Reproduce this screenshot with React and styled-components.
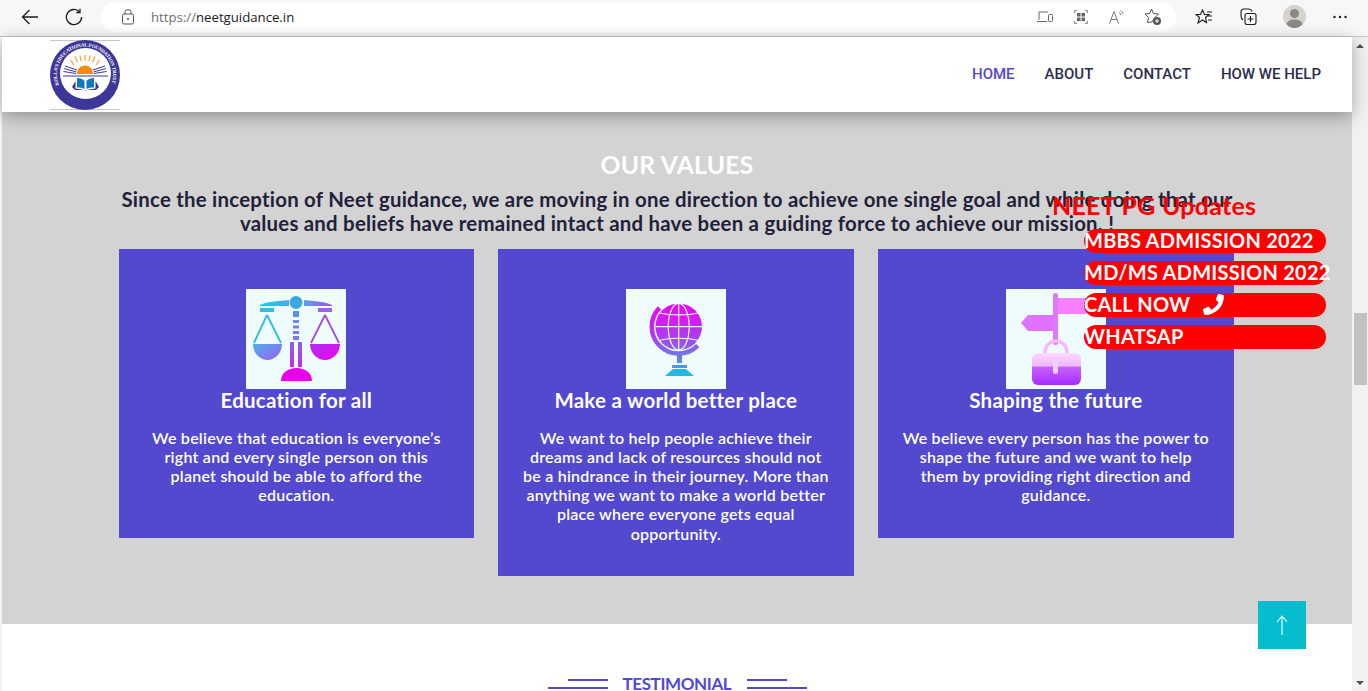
import React from "react";
import styled, {createGlobalStyle} from "styled-components";
import {FaPhone} from "react-icons/fa";

const GlobalStyle = createGlobalStyle`
  html, body {
    margin: 0;
    padding: 0;
    height: 691px;
    overflow: hidden;
    background: #fff;
  }
  * {
    box-sizing: border-box;
  }
`;

const PURPLE = "#5249cf";
const BODY_FONT = `"Lato", "Open Sans", sans-serif`;

const Shell = styled.div`
  width: 1368px;
  height: 691px;
  display: flex;
  flex-direction: column;
  overflow: hidden;
`;

const BrowserBar = styled.div`
  height: 37px;
  flex: none;
  background: #f7f7f7;
  border-bottom: 1px solid #c4c4c4;
  display: flex;
  align-items: center;
  padding: 0 0 3px 0;
`;

const NavIcon = styled.div`
  width: ${(p) => p.$w || 44}px;
  flex: none;
  display: flex;
  justify-content: center;
  align-items: center;
`;

const AddressBar = styled.div`
  width: 1075px;
  height: 30px;
  margin-left: 12px;
  background: #fff;
  border-radius: 15px;
  display: flex;
  align-items: center;
  padding: 0 5px 0 21px;
  font: 13.2px "Open Sans", sans-serif;
  color: #1a1a1a;
`;

const Protocol = styled.span`
  color: #6e6e6e;
  margin-left: 17px;
`;

const AddressIcons = styled.div`
  margin-left: auto;
  display: grid;
  grid-template-columns: repeat(4, 36px);
  justify-items: center;
  align-items: center;
`;

const ToolIcons = styled.div`
  display: flex;
  align-items: center;
  margin-left: 6px;
`;

const Viewport = styled.div`
  flex: 1;
  display: flex;
  min-height: 0;
`;

const Page = styled.div`
  position: relative;
  width: 1352px;
  padding-left: 2px;
  background: #f3f3f3;
  font-family: ${BODY_FONT};
  letter-spacing: 0.015em;
  display: flex;
  flex-direction: column;
`;

const Header = styled.header`
  position: relative;
  z-index: 2;
  height: 75px;
  flex: none;
  background: #fff;
  box-shadow: 0 4px 16px rgba(0, 0, 0, 0.32);
  display: flex;
  align-items: center;
  justify-content: space-between;
  padding: 0 31px 0 48px;
`;

const Menu = styled.nav`
  display: flex;
  gap: 30px;
  padding-bottom: 2px;
  font: 500 15px "Roboto", sans-serif;
  letter-spacing: 0;
`;

const MenuItem = styled.a`
  color: ${(p) => (p.$active ? PURPLE : "#2a2d4f")};
`;

const Values = styled.section`
  height: 512px;
  flex: none;
  background: #d3d3d3;
  padding: 38px 0 0;
  text-align: center;
`;

const ValuesTitle = styled.h2`
  margin: 0;
  font-size: 24.7px;
  line-height: 29px;
  font-weight: 700;
  color: #fff;
`;

const ValuesIntro = styled.p`
  margin: 8px auto 0;
  width: 1130px;
  font-size: 20.4px;
  line-height: 24px;
  font-weight: 700;
  color: #212139;
`;

const CardRow = styled.div`
  width: 1115px;
  margin: 14px 0 0 116.8px;
  display: grid;
  grid-template-columns: 355px 356px 356px;
  column-gap: 24px;
  align-items: start;
`;

const Card = styled.article`
  background: ${PURPLE};
  padding: 40px 24px 33.4px;
  color: #fff;
  min-height: 289px;
`;

const CardArt = styled.svg`
  display: block;
  width: 100px;
  height: 100px;
  margin: 0 auto;
  background: #effcfd;
`;

const CardTitle = styled.h3`
  margin: 0 0 15.6px;
  font-size: 20.5px;
  line-height: 23px;
  font-weight: 700;
`;

const CardText = styled.p`
  margin: 0;
  font-size: 16px;
  line-height: 19.2px;
  font-weight: 600;
`;

const Testimonial = styled.section`
  flex: 1;
  background: #fff;
  display: flex;
  justify-content: center;
  align-items: flex-start;
  padding-top: 50px;
  gap: 15px;
`;

const TestimonialLabel = styled.h4`
  margin: 0;
  width: 109px;
  font-size: 17px;
  line-height: 20px;
  font-weight: 700;
  letter-spacing: -0.4px;
  white-space: nowrap;
  color: ${PURPLE};
`;

const DoubleRule = styled.div`
  width: 60px;
  padding-top: 5px;
  display: flex;
  flex-direction: column;
  align-items: ${(p) => (p.$left ? "flex-end" : "flex-start")};
  gap: 6px;
`;

const Rule = styled.span`
  display: block;
  height: 2px;
  width: ${(p) => p.$w}px;
  background: ${PURPLE};
`;

const Updates = styled.aside`
  position: absolute;
  z-index: 3;
  top: 155px;
  left: 1052px;
  width: 274px;
`;

const UpdatesTitle = styled.div`
  font-size: 25px;
  line-height: 27px;
  font-weight: 700;
  color: #f00;
`;

const UpdateLinks = styled.div`
  margin: 10px 0 0 32px;
  display: flex;
  flex-direction: column;
  gap: 8px;
`;

const UpdateLink = styled.a`
  height: 24px;
  padding-bottom: 2px;
  display: flex;
  align-items: center;
  gap: 13px;
  background: #f00;
  border-radius: 12px;
  color: #fff;
  font-size: 20px;
  font-weight: 700;
  white-space: nowrap;
`;

const ScrollTop = styled.button`
  position: absolute;
  z-index: 3;
  top: 564px;
  left: 1258px;
  width: 48px;
  height: 48px;
  border: 0;
  padding: 0;
  background: #06bccf;
  display: flex;
  align-items: center;
  justify-content: center;
`;

const Scrollbar = styled.div`
  width: 16px;
  flex: none;
  background: #f1f1f1;
  display: flex;
  flex-direction: column;
  align-items: center;
  padding-top: 7px;
`;

const Thumb = styled.div`
  width: 13px;
  height: 72px;
  margin-top: 265px;
  background: #c1c1c1;
`;

const Arrow = styled.span`
  width: 0;
  height: 0;
  border-left: 4px solid transparent;
  border-right: 4px solid transparent;
  border-${(p) => (p.$down ? "top" : "bottom")}: 4px solid #505050;
  margin-top: ${(p) => p.$gap || 0}px;
`;

const cards = [
    {
        title: "Education for all",
        text: "We believe that education is everyone’s right and every single person on this planet should be able to afford the education.",
        art: <ScaleArt/>,
    },
    {
        title: "Make a world better place",
        text: "We want to help people achieve their dreams and lack of resources should not be a hindrance in their journey. More than anything we want to make a world better place where everyone gets equal opportunity.",
        art: <GlobeArt/>,
    },
    {
        title: "Shaping the future",
        text: "We believe every person has the power to shape the future and we want to help them by providing right direction and guidance.",
        art: <SignArt/>,
    },
];

function ScaleArt() {
    return (
        <CardArt viewBox="0 0 100 100">
            <defs>
                <linearGradient id="armL" x1="0" x2="1" y1="0" y2="0">
                    <stop offset="0" stopColor="#0ad4e0"/>
                    <stop offset="1" stopColor="#50a8e8"/>
                </linearGradient>
                <linearGradient id="armR" x1="0" x2="1" y1="0" y2="0">
                    <stop offset="0" stopColor="#5aa0e8"/>
                    <stop offset="1" stopColor="#a050f0"/>
                </linearGradient>
                <linearGradient id="bowlL" x1="0" x2="1" y1="0" y2="1">
                    <stop offset="0" stopColor="#4fb0e8"/>
                    <stop offset="1" stopColor="#9a60f0"/>
                </linearGradient>
                <linearGradient id="bowlR" x1="0" x2="1" y1="0" y2="1">
                    <stop offset="0" stopColor="#b030f0"/>
                    <stop offset="1" stopColor="#f000f0"/>
                </linearGradient>
                <linearGradient id="stem" x1="0" x2="0" y1="0" y2="1">
                    <stop offset="0" stopColor="#8a60f0"/>
                    <stop offset="1" stopColor="#c030f0"/>
                </linearGradient>
            </defs>
            <circle cx="50" cy="13.5" r="6.5" fill="#3fa6e0"/>
            <path d="M14 16C20 13 32 12 43 11V17H14Z" fill="url(#armL)"/>
            <path d="M58 11C68 12 80 13 86 16V17H58Z" fill="url(#armR)"/>
            <rect x="14" y="19" width="14" height="4" fill="#2cc2e2"/>
            <rect x="72" y="19" width="14" height="4" fill="#9a60f0"/>
            <rect x="47" y="22" width="6" height="6" fill="#5f8ee8"/>
            <rect x="47" y="31" width="6" height="3" fill="#6a86ea"/>
            <rect x="47" y="36.500" width="6" height="3" fill="#6e82ec"/>
            <rect x="47" y="42" width="6" height="3" fill="#7480ec"/>
            <rect x="47" y="47" width="6" height="4" fill="#7a78ee"/>
            <rect x="44" y="53" width="4" height="25" fill="url(#stem)"/>
            <rect x="52" y="53" width="4" height="25" fill="url(#stem)"/>
            <path d="M35 92C35 84 42 79 50.500 79S66 84 66 92Z" fill="#e800ea"/>
            <path d="M21 26L8 54M21 26L35 54" stroke="#2cbce4" strokeWidth="1.800" fill="none"/>
            <path d="M7 55H36C36 64 29 71 21.500 71S7 64 7 55Z" fill="url(#bowlL)"/>
            <path d="M79 26L65 54M79 26L93 54" stroke="#a845f0" strokeWidth="1.800" fill="none"/>
            <path d="M64 55H94C94 64 87 71 79 71S64 64 64 55Z" fill="url(#bowlR)"/>
        </CardArt>
    );
}

function GlobeArt() {
    return (
        <CardArt viewBox="0 0 100 100">
            <defs>
                <linearGradient id="globe" gradientUnits="userSpaceOnUse" x1="0" x2="0" y1="12" y2="88">
                    <stop offset="0" stopColor="#f400ee"/>
                    <stop offset="0.45" stopColor="#b038f0"/>
                    <stop offset="0.75" stopColor="#6a80ea"/>
                    <stop offset="1" stopColor="#20bce0"/>
                </linearGradient>
            </defs>
            <circle cx="52.700" cy="37.700" r="23.300" fill="url(#globe)"/>
            <g fill="none" stroke="#effcfd" strokeWidth="1.200">
                <ellipse cx="52.700" cy="37.700" rx="10.500" ry="23.300"/>
                <path d="M52.700 14.400V61M29.400 37.700H76"/>
                <path d="M33.500 24C44 26.500 62 26.500 72 24M33.500 51.500C44 48.500 62 48.500 72 51.500"/>
            </g>
            <path d="M33.500 18.900A26.800 26.800 0 0 0 71.700 56.600" stroke="url(#globe)" strokeWidth="4.500" fill="none"/>
            <rect x="51" y="64" width="5" height="10" fill="url(#globe)"/>
            <rect x="46" y="76" width="15" height="3" fill="url(#globe)"/>
            <path d="M39 87L47 80H60L68 87Z" fill="#24b8e2"/>
        </CardArt>
    );
}

function SignArt() {
    return (
        <CardArt viewBox="0 0 100 100">
            <defs>
                <linearGradient id="bag" x1="0" x2="0" y1="0" y2="1">
                    <stop offset="0" stopColor="#ffd8ff"/>
                    <stop offset="0.4" stopColor="#ecb8ff"/>
                    <stop offset="0.45" stopColor="#c860ff"/>
                    <stop offset="1" stopColor="#a82cff"/>
                </linearGradient>
            </defs>
            <rect x="47" y="4" width="5" height="52" rx="2.500" fill="#e078ff"/>
            <path d="M52 9H80L84 17L80 25H52Z" fill="#f880ff"/>
            <path d="M15 34L22 26H47V42H22Z" fill="#de72ff"/>
            <path d="M39 64C39 48 61 48 61 64" stroke="#f8b8ff" strokeWidth="3.500" fill="none"/>
            <rect x="26" y="64" width="49" height="32" rx="6" fill="url(#bag)"/>
            <rect x="47" y="71" width="5" height="14" rx="2.500" fill="#f0d0ff"/>
        </CardArt>
    );
}

function Logo() {
    return (
        <svg width="70" height="70" viewBox="0 0 70 70">
            <defs>
                <path id="ringText" d="M9 45A28 28 0 1 1 61 45"/>
            </defs>
            <rect width="70" height="1" y="0" fill="#c8c8c8"/>
            <rect width="70" height="1" y="69" fill="#c8c8c8"/>
            <circle cx="35" cy="35" r="35" fill="#3b3697"/>
            <circle cx="35.500" cy="33.500" r="25.500" fill="#fff"/>
            <text fontFamily="'Liberation Serif', serif" fontWeight="700" fontSize="5" fill="#fff">
                <textPath href="#ringText" textLength="107">KOLLA’S EDUCATIONAL FOUNDATION TRUST</textPath>
            </text>
            <path d="M27 34C27 29 30.500 25.500 35 25.500S43 29 43 34Z" fill="#f58a12"/>
            <g stroke="#f7a53c" strokeWidth="1.300">
                <path d="M24 25L20.500 20M27.500 22L25 16.500M31 21L30 15.500M35 20.500V15M39 21L40 15.500M42.500 22L45 16.500M46 25L49.500 20"/>
            </g>
            <g stroke="#3b3697" strokeWidth="1">
                <path d="M15 26L27 30M14 28.500L26.500 32M13.500 31.500L26 33.500M55 26L43 30M56 28.500L43.500 32M56.500 31.500L44 33.500"/>
                <path d="M13 36H58" strokeWidth="1.200"/>
            </g>
            <path d="M27 38C30 38 33 39 34.500 41V49C32 47.500 30 47.500 27 47.500Z" fill="#0d77c4"/>
            <path d="M44 38C41 38 38 39 36.500 41V49C39 47.500 41 47.500 44 47.500Z" fill="#0d77c4"/>
            <path d="M22 47L25.500 41V48.500L32 49.500L35.500 50.500L39 49.500L45.500 48.500V41L49 47L46 50H25Z" fill="#3b3697"/>
        </svg>
    );
}

function BackIcon() {
    return (
        <svg width="18" height="16" viewBox="0 0 18 16" fill="none" stroke="#1c1c1c" strokeWidth="1.300">
            <path d="M17 8H1.500M8.500 1L1.500 8L8.500 15"/>
        </svg>
    );
}

function ReloadIcon() {
    return (
        <svg width="18" height="18" viewBox="0 0 18 18" fill="none" stroke="#1c1c1c" strokeWidth="1.300">
            <path d="M14.500 3.800A7.600 7.600 0 1 0 16.600 9"/>
            <path d="M15 0.800V4.500H11.300"/>
        </svg>
    );
}

function LockIcon() {
    return (
        <svg width="12" height="16" viewBox="0 0 12 16" fill="none" stroke="#555" strokeWidth="1">
            <rect x="0.500" y="5" width="11" height="10" rx="1.500"/>
            <path d="M3 5V3.500A3 3 0 0 1 9 3.500V5"/>
            <circle cx="6" cy="10" r="1" fill="#555" stroke="none"/>
        </svg>
    );
}

function DeviceIcon() {
    return (
        <svg width="16" height="12" viewBox="0 0 16 12" fill="none" stroke="#666" strokeWidth="1">
            <path d="M2 9V1H11M0 10.500H10"/>
            <rect x="11.500" y="3.500" width="4" height="7" rx="0.800"/>
        </svg>
    );
}

function GridIcon() {
    return (
        <svg width="14" height="14" viewBox="0 0 14 14" fill="#666">
            <path d="M0.500 3V0.500H3M11 0.500H13.500V3M13.500 11V13.500H11M3 13.500H0.500V11" fill="none" stroke="#888"/>
            <rect x="3" y="3" width="3.500" height="3.500"/>
            <rect x="7.500" y="3" width="3.500" height="3.500"/>
            <rect x="3" y="7.500" width="3.500" height="3.500"/>
            <rect x="7.500" y="7.500" width="3.500" height="3.500"/>
        </svg>
    );
}

function ReadAloudIcon() {
    return (
        <svg width="16" height="14" viewBox="0 0 16 14" fill="none" stroke="#777" strokeWidth="1">
            <path d="M0.500 13.500L5 1.500L9.500 13.500M2 9.500H8"/>
            <path d="M10 2.500C11 3 11.500 4 11.700 5M11.500 0.500C13 1.300 13.800 2.800 14 4.500"/>
        </svg>
    );
}

function StarAddIcon() {
    return (
        <svg width="18" height="18" viewBox="0 0 18 18" fill="none" stroke="#555" strokeWidth="1">
            <path d="M7.500 1L9.500 5.500L14.500 6L11 9.500L8 14L3.500 14.500L4.500 9.500L1 6L5.500 5.500Z"/>
            <circle cx="13" cy="13" r="4" fill="#555" stroke="none"/>
            <path d="M13 11V15M11 13H15" stroke="#fff"/>
        </svg>
    );
}

function FavoritesIcon() {
    return (
        <svg width="18" height="16" viewBox="0 0 18 16" fill="none" stroke="#1c1c1c" strokeWidth="1.100">
            <path d="M7.500 1L9.500 5.500H14L10.500 8.500L11.500 13.500L7.500 11L3 14L4.500 8.500L1 5.500H5.500Z"/>
            <path d="M12 3H17M13 7H17M13 11H17"/>
        </svg>
    );
}

function CollectionsIcon() {
    return (
        <svg width="17" height="17" viewBox="0 0 17 17" fill="none" stroke="#1c1c1c" strokeWidth="1.100">
            <path d="M3 12C1.500 11 1 9.500 1 8V4C1 2 2 1 4 1H9C10.500 1 11.500 2 12 3.500"/>
            <rect x="5" y="5.500" width="11" height="11" rx="2"/>
            <path d="M10.500 8V14M7.500 11H13.500"/>
        </svg>
    );
}

function ProfileIcon() {
    return (
        <svg width="23" height="23" viewBox="0 0 23 23">
            <circle cx="11.500" cy="11.500" r="11.500" fill="#d6d3cf"/>
            <circle cx="11.500" cy="8.500" r="4.500" fill="#8c8985"/>
            <path d="M3.500 19C5 15.500 8 14.500 11.500 14.500S18 15.500 19.500 19C17.500 21.500 14.500 23 11.500 23S5.500 21.500 3.500 19Z" fill="#8c8985"/>
        </svg>
    );
}

function MoreIcon() {
    return (
        <svg width="14" height="4" viewBox="0 0 14 4" fill="#1c1c1c">
            <circle cx="1.500" cy="2" r="1.200"/>
            <circle cx="7" cy="2" r="1.200"/>
            <circle cx="12.500" cy="2" r="1.200"/>
        </svg>
    );
}

function UpArrow() {
    return (
        <svg width="12" height="20" viewBox="0 0 12 20" fill="none" stroke="#fff" strokeWidth="1.100">
            <path d="M6 20V1M1 7L6 1L11 7"/>
        </svg>
    );
}

export default function App() {
    return (
        <Shell>
            <GlobalStyle/>
            <BrowserBar>
                <NavIcon $w={59}><BackIcon/></NavIcon>
                <NavIcon $w={30}><ReloadIcon/></NavIcon>
                <AddressBar>
                    <LockIcon/>
                    <Protocol>https://</Protocol>neetguidance.in
                    <AddressIcons>
                        <DeviceIcon/>
                        <GridIcon/>
                        <ReadAloudIcon/>
                        <StarAddIcon/>
                    </AddressIcons>
                </AddressBar>
                <ToolIcons>
                    <NavIcon><FavoritesIcon/></NavIcon>
                    <NavIcon><CollectionsIcon/></NavIcon>
                    <NavIcon $w={48}><ProfileIcon/></NavIcon>
                    <NavIcon><MoreIcon/></NavIcon>
                </ToolIcons>
            </BrowserBar>
            <Viewport>
                <Page>
                    <Header>
                        <Logo/>
                        <Menu>
                            <MenuItem $active>HOME</MenuItem>
                            <MenuItem>ABOUT</MenuItem>
                            <MenuItem>CONTACT</MenuItem>
                            <MenuItem>HOW WE HELP</MenuItem>
                        </Menu>
                    </Header>
                    <Values>
                        <ValuesTitle>OUR VALUES</ValuesTitle>
                        <ValuesIntro>
                            Since the inception of Neet guidance, we are moving in one direction to achieve one single goal and while doing that our values and beliefs have remained intact and have been a guiding force to achieve our mission. !
                        </ValuesIntro>
                        <CardRow>
                            {cards.map((card) => (
                                <Card key={card.title}>
                                    {card.art}
                                    <CardTitle>{card.title}</CardTitle>
                                    <CardText>{card.text}</CardText>
                                </Card>
                            ))}
                        </CardRow>
                    </Values>
                    <Testimonial>
                        <DoubleRule $left>
                            <Rule $w={40}/>
                            <Rule $w={60}/>
                        </DoubleRule>
                        <TestimonialLabel>TESTIMONIAL</TestimonialLabel>
                        <DoubleRule>
                            <Rule $w={40}/>
                            <Rule $w={60}/>
                        </DoubleRule>
                    </Testimonial>
                    <Updates>
                        <UpdatesTitle>NEET PG Updates</UpdatesTitle>
                        <UpdateLinks>
                            <UpdateLink>MBBS ADMISSION 2022</UpdateLink>
                            <UpdateLink>MD/MS ADMISSION 2022</UpdateLink>
                            <UpdateLink>CALL NOW <FaPhone size={21}/></UpdateLink>
                            <UpdateLink>WHATSAP</UpdateLink>
                        </UpdateLinks>
                    </Updates>
                    <ScrollTop><UpArrow/></ScrollTop>
                </Page>
                <Scrollbar>
                    <Arrow/>
                    <Thumb/>
                    <Arrow $down $gap={296}/>
                </Scrollbar>
            </Viewport>
        </Shell>
    );
}
